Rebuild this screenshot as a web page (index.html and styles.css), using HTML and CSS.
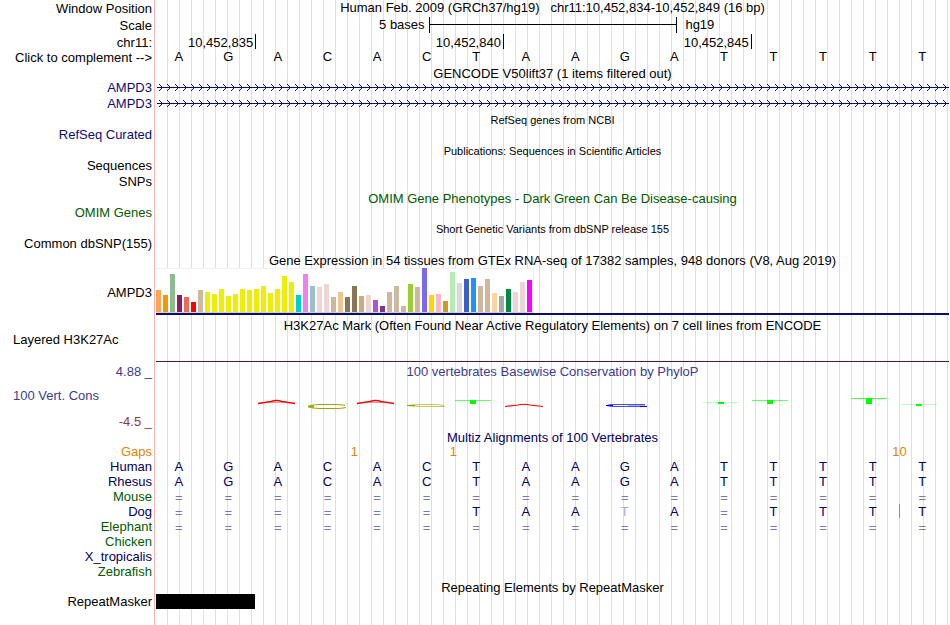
FILE: index.html
```html
<!DOCTYPE html>
<html lang="en">
<head>
    <meta charset="UTF-8">
    <meta name="viewport" content="width=device-width, initial-scale=1.0">
    <title>Genome Browser</title>
    <link rel="stylesheet" href="styles.css">
</head>
<body>
    <div class="browser">
        <div class="row ruler">
            <div class="label">Window Position</div>
            <div class="title">Human Feb. 2009 (GRCh37/hg19) &nbsp; chr11:10,452,834-10,452,849 (16 bp)</div>
        </div>
        <div class="row ruler">
            <div class="label">Scale</div>
            <div class="data scale">
                <span class="scale-size">5 bases</span>
                <span class="scale-bar"></span>
                <span class="scale-db">hg19</span>
            </div>
        </div>
        <div class="row chrom">
            <div class="label">chr11:</div>
            <div class="data positions">
                <span class="pos">10,452,835</span>
                <span class="pos">10,452,840</span>
                <span class="pos">10,452,845</span>
            </div>
        </div>
        <div class="row bases-row">
            <button class="label complement" type="button">Click to complement --&gt;</button>
            <div class="data bases" data-seq="AGACACTAAGATTTTT"></div>
        </div>

        <div class="row head"><div class="title">GENCODE V50lift37 (1 items filtered out)</div></div>
        <div class="row navy">
            <div class="label">AMPD3</div>
            <div class="data">
                <svg class="gene" width="100%" height="16">
                    <defs>
                        <pattern id="arrows" width="8" height="16" patternUnits="userSpaceOnUse">
                            <path d="M3 4l3.500 3.500l-3.500 3.500" fill="none" stroke="#0c0c78" stroke-width="1"/>
                        </pattern>
                    </defs>
                    <rect x="1" y="7" width="100%" height="1" fill="#0c0c78"/>
                    <rect width="100%" height="16" fill="url(#arrows)"/>
                </svg>
            </div>
        </div>
        <div class="row navy">
            <div class="label">AMPD3</div>
            <div class="data">
                <svg class="gene" width="100%" height="16">
                    <rect x="1" y="7" width="100%" height="1" fill="#0c0c78"/>
                    <rect width="100%" height="16" fill="url(#arrows)"/>
                </svg>
            </div>
        </div>

        <div class="row head small"><div class="title">RefSeq genes from NCBI</div></div>
        <div class="row navy"><div class="label">RefSeq Curated</div></div>

        <div class="row head small"><div class="title">Publications: Sequences in Scientific Articles</div></div>
        <div class="row"><div class="label">Sequences</div></div>
        <div class="row"><div class="label">SNPs</div></div>

        <div class="row head green"><div class="title">OMIM Gene Phenotypes - Dark Green Can Be Disease-causing</div></div>
        <div class="row green"><div class="label">OMIM Genes</div></div>

        <div class="row head small"><div class="title">Short Genetic Variants from dbSNP release 155</div></div>
        <div class="row"><div class="label">Common dbSNP(155)</div></div>

        <div class="row head"><div class="title">Gene Expression in 54 tissues from GTEx RNA-seq of 17382 samples, 948 donors (V8, Aug 2019)</div></div>
        <div class="row gtex">
            <div class="label">AMPD3</div>
            <div class="data gtex-data">
                <div class="bars"></div>
            </div>
        </div>

        <div class="row head"><div class="title">H3K27Ac Mark (Often Found Near Active Regulatory Elements) on 7 cell lines from ENCODE</div></div>
        <div class="row h3k27">
            <div class="label left">Layered H3K27Ac</div>
            <div class="data signal"></div>
        </div>

        <div class="row head cons">
            <div class="label">4.88 _</div>
            <div class="title">100 vertebrates Basewise Conservation by PhyloP</div>
        </div>
        <div class="row phylop">
            <div class="cons-labels">
                <div class="label left cons">100 Vert. Cons</div>
                <div class="label cons-min">-4.5 _</div>
            </div>
            <div class="data">
                <svg width="100%" height="51" viewBox="156 378 793 51" preserveAspectRatio="none">
                    <g fill="none" stroke="#ff0000">
                        <path d="M258 403.500L271 401.500Q276.500 399.500 282 401.500L295 403.500" stroke-width="1.400"/>
                        <path d="M270 402.500H284" stroke-width="1" opacity=".4"/>
                        <path d="M357 403.500L370 401.500Q375.500 399.500 381 401.500L394 403.500" stroke-width="1.400"/>
                        <path d="M369 402.500H383" stroke-width="1" opacity=".4"/>
                        <path d="M505 406.500L518 405Q524 403.500 530 405L543 406.500" stroke-width="1.100"/>
                    </g>
                    <g fill="none" stroke="#a0a000">
                        <path d="M345 405.500Q342 404.500 336 404.500H320Q309 405 309 406.500Q309 408 320 408.500H336Q342 408.500 346 407.500" stroke-width="1"/>
                        <path d="M308 406.500H314" stroke-width="2"/>
                        <path d="M444 405.500Q440 404.500 434 404.500H420Q408 405 408 405.500Q408 406 420 406.500H434Q440 406.500 445 406.500" stroke-width="1" opacity=".6"/>
                        <path d="M407 405.500H415" stroke-width="1"/>
                    </g>
                    <g fill="none" stroke="#0000ff">
                        <path d="M645 404.500H612Q607 405 607 405.500Q607 406 613 406.500H644" stroke-width="1" opacity=".7"/>
                        <path d="M606 405.500H613M640 406.500H647" stroke-width="1"/>
                        <path d="M628 405.500H645" stroke-width="1" opacity=".3"/>
                    </g>
                    <g fill="#00ff00">
                        <path d="M455 400h36v1h-36z" opacity=".6"/>
                        <path d="M470 400h6v4h-6z"/>
                        <path d="M703 402h36v1h-36z" opacity=".25"/>
                        <path d="M718 402h6v2h-6z"/>
                        <path d="M752 400h36v1h-36z" opacity=".6"/>
                        <path d="M767 400h6v4h-6z"/>
                        <path d="M851 398h36v1h-36z" opacity=".7"/>
                        <path d="M866 398h6v6h-6z"/>
                        <path d="M901 404h36v1h-36z" opacity=".25"/>
                        <path d="M916 404h6v2h-6z"/>
                    </g>
                </svg>
            </div>
        </div>

        <div class="row head navy-text"><div class="title">Multiz Alignments of 100 Vertebrates</div></div>
        <div class="row align gaps">
            <div class="label">Gaps</div>
            <div class="data bases">
                <span class="gap-4">1</span>
                <span class="gap-6">1</span>
                <span class="gap-15">10</span>
            </div>
        </div>
        <div class="row align navy-text"><div class="label">Human</div><div class="data bases" data-seq="AGACACTAAGATTTTT"></div></div>
        <div class="row align navy-text"><div class="label">Rhesus</div><div class="data bases" data-seq="AGACACTAAGATTTTT"></div></div>
        <div class="row align green"><div class="label">Mouse</div><div class="data bases" data-seq="================"></div></div>
        <div class="row align navy-text"><div class="label">Dog</div><div class="data bases" data-seq="======TAAtA=TTT|T"></div></div>
        <div class="row align green"><div class="label">Elephant</div><div class="data bases" data-seq="================"></div></div>
        <div class="row align green"><div class="label">Chicken</div></div>
        <div class="row align navy-text"><div class="label">X_tropicalis</div></div>
        <div class="row align green"><div class="label">Zebrafish</div></div>

        <div class="row head"><div class="title">Repeating Elements by RepeatMasker</div></div>
        <div class="row">
            <div class="label">RepeatMasker</div>
            <div class="data"><div class="repeat"></div></div>
        </div>
    </div>

    <script>
        // one cell per base; lower case = mismatch, | = insert before the next base
        document.querySelectorAll('[data-seq]').forEach(function (el) {
            let insert = false;
            for (const c of el.dataset.seq) {
                if (c === '|') {
                    insert = true;
                    continue;
                }
                const cell = document.createElement('span');
                cell.textContent = c.toUpperCase();
                if (c === '=') cell.className = 'same';
                if (c === 't') cell.className = 'faint';
                if (insert) cell.className = 'insert';
                insert = false;
                el.appendChild(cell);
            }
        });

        const tissues = [
            [22, '#ffa54f'], [17, '#ee9a00'], [38, '#8fbc8f'], [17, '#8b1c62'], [15, '#ee6a50'], [10, '#ff0000'],
            [22, '#cdb79e'], [20, '#eeee00'], [18, '#eeee00'], [23, '#eeee00'], [16, '#eeee00'], [18, '#eeee00'],
            [23, '#eeee00'], [22, '#eeee00'], [23, '#eeee00'], [26, '#eeee00'], [19, '#eeee00'], [23, '#eeee00'],
            [36, '#eeee00'], [30, '#eeee00'], [17, '#00cdcd'], [38, '#ee82ee'], [26, '#9ac0cd'], [25, '#eed5d2'],
            [28, '#eed5d2'], [15, '#cdb79e'], [20, '#eec591'], [15, '#8b7355'], [26, '#8b7355'], [16, '#cdaa7d'],
            [17, '#eed5d2'], [12, '#b452cd'], [6, '#7a378b'], [20, '#cdb79e'], [26, '#cdb79e'], [6, '#cdb79e'],
            [28, '#9acd32'], [25, '#cdb79e'], [44, '#7b68ee'], [17, '#ffd700'], [18, '#ffb6c1'], [11, '#cd9b1d'],
            [40, '#b4eeb4'], [29, '#d9d9d9'], [33, '#3a5fcd'], [34, '#1e90ff'], [26, '#cdb79e'], [33, '#cdb79e'],
            [19, '#ffd39b'], [16, '#a6a6a6'], [23, '#008b45'], [20, '#eed5d2'], [30, '#eed5d2'], [32, '#ff00ff']
        ];
        const bars = document.querySelector('.bars');
        tissues.forEach(function (t) {
            const bar = document.createElement('div');
            bar.className = 'bar';
            bar.style.height = t[0] + 'px';
            bar.style.backgroundColor = t[1];
            bars.appendChild(bar);
        });
    </script>
</body>
</html>
```

FILE: styles.css
```css
* {
    box-sizing: border-box;
}

body {
    margin: 0;
    background-color: #fff;
    color: #000;
    font-family: "Liberation Sans", Arial, Helvetica, sans-serif;
    font-size: 13px;
    line-height: 15px;
}

/* pink divider after the labels, then a guideline every 12px */
.browser {
    min-height: 100vh;
    padding-right: 1px;
    background-image:
        linear-gradient(#ffb4b4, #ffb4b4),
        repeating-linear-gradient(to right, transparent 0, transparent 11px, #dcdcf8 11px, #dcdcf8 12px);
    background-size: 1px 100%, auto;
    background-position: 154px 0, 156px 0;
    background-repeat: no-repeat;
}

.row {
    display: grid;
    grid-template-columns: 152px minmax(0, 1fr);
    column-gap: 4px;
    height: 16px;
}

.ruler {
    height: 17px;
}

.head,
.align,
.bases-row {
    height: 15px;
}

.label {
    grid-column: 1;
    text-align: right;
    white-space: nowrap;
}

.left {
    padding-left: 13px;
    text-align: left;
}

.title {
    grid-column: 2;
    text-align: center;
    white-space: nowrap;
}

.data {
    grid-column: 2;
}

.ruler .label,
.head .title,
.head .label {
    padding-top: 1px;
}

.small {
    font-size: 11px;
}

.navy {
    color: #0c0c78;
}

.navy-text {
    color: #000064;
}

.green {
    color: #005a00;
}

.cons {
    color: #3c3c8c;
}

.complement {
    padding: 0;
    border: 0;
    background: none;
    color: inherit;
    font: inherit;
    cursor: pointer;
}

.scale {
    display: grid;
    grid-template-columns: 1fr 31.25% 1fr;
}

.scale-size {
    padding-right: 4px;
    text-align: right;
}

.scale-db {
    padding-left: 9px;
}

.scale-bar {
    height: 16px;
    margin-right: -1px;
    border: solid #000;
    border-width: 0 1px;
    background: linear-gradient(#000, #000) 0 7px / 100% 1px no-repeat;
}

.chrom {
    line-height: 17px;
}

.positions {
    display: grid;
    grid-template-columns: 2fr 5fr 5fr 4fr;
}

.pos {
    height: 15px;
    margin-right: -1px;
    padding-right: 2px;
    border-right: 1px solid #000;
    text-align: right;
}

.bases {
    display: grid;
    grid-template-columns: repeat(16, 1fr);
    margin: 0 2px 0 -2px;
    text-align: center;
}

.bases-row .bases {
    line-height: 13px;
}

.same {
    color: #7878b4;
    line-height: 17px;
}

.faint {
    color: #aaaad2;
}

.insert {
    position: relative;
}

.insert::before {
    content: "";
    position: absolute;
    top: 0;
    left: 2px;
    width: 1px;
    height: 14px;
    background-color: #e68200;
}

.gaps {
    color: #e68200;
}

.gap-4 {
    grid-column: 4 / span 2;
}

.gap-6 {
    grid-column: 6 / span 2;
    grid-row: 1;
}

.gap-15 {
    grid-column: 15 / span 2;
    grid-row: 1;
}

.gaps .bases {
    margin: 0;
}

.gene {
    display: block;
}

.gtex {
    height: 50px;
    align-items: center;
}

.gtex-data {
    align-self: start;
    padding-top: 1px;
    border-bottom: 2px solid #0c0c78;
}

.bars {
    display: flex;
    align-items: flex-end;
    gap: 2px;
    width: 378px;
    height: 45px;
    border: solid #f0f0f0;
    border-width: 0 1px 0 0;
    border-bottom: 1px solid #d2d2d2;
    background: linear-gradient(#f0f0f0, #f0f0f0) 0 0 / 100% 1px no-repeat #fff;
}

.bar {
    width: 5px;
}

.h3k27 {
    height: 31px;
}

.signal {
    height: 30px;
    border-bottom: 1px solid #5a1428;
}

.phylop {
    height: 51px;
}

.phylop svg {
    display: block;
}

.cons-labels {
    display: flex;
    flex-direction: column;
    justify-content: space-between;
    padding-top: 10px;
}

.cons-min {
    color: #8c3c3c;
}

.repeat {
    width: 12.5%;
    height: 15px;
    background-color: #000;
}
```
